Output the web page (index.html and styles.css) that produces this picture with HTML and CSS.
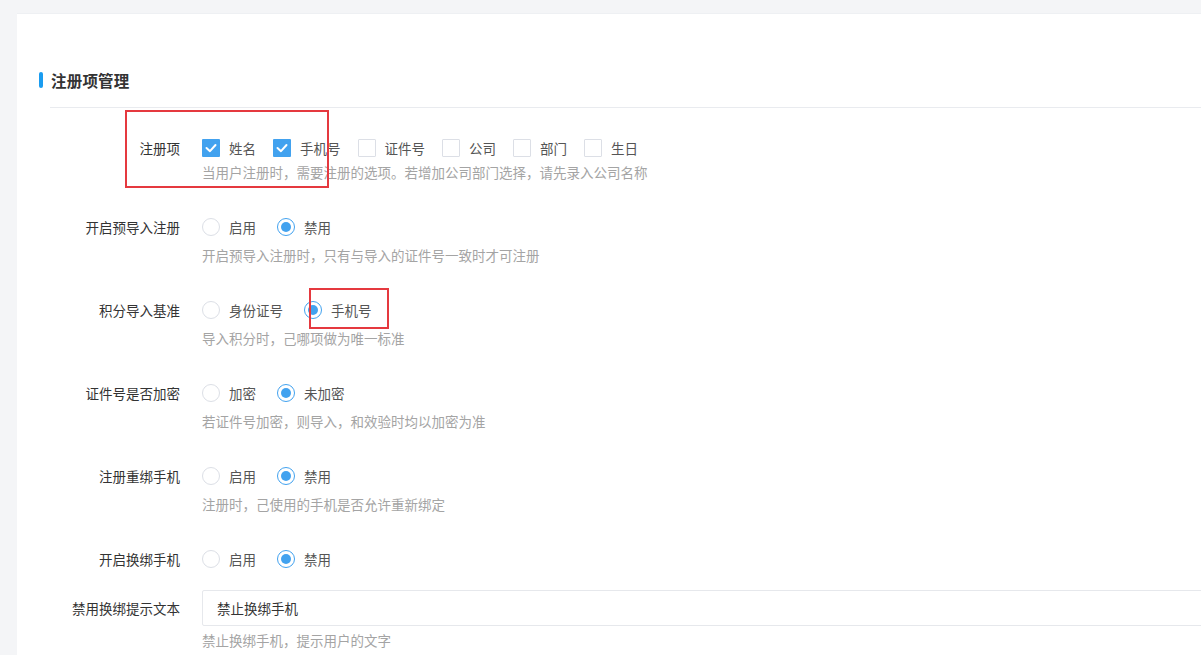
FILE: index.html
```html
<!DOCTYPE html>
<html lang="zh-CN">
<head>
<meta charset="utf-8">
<title>注册项管理</title>
<link rel="stylesheet" href="styles.css">
</head>
<body>
<div class="page">
  <div class="card">
    <div class="section-title"><span class="bar"></span><span class="title-text">注册项管理</span></div>
    <div class="divider"></div>

    <div class="form">
      <div class="form-item item-first">
        <div class="label row-short">注册项</div>
        <div class="field">
          <div class="controls row-short">
            <span class="opt"><span class="checkbox checked"><svg viewBox="0 0 18 18"><polyline points="4.5,9 8,12.2 13.5,6" fill="none" stroke="#fff" stroke-width="2" stroke-linecap="round" stroke-linejoin="round"/></svg></span><span class="opt-text">姓名</span></span>
            <span class="opt"><span class="checkbox checked"><svg viewBox="0 0 18 18"><polyline points="4.5,9 8,12.2 13.5,6" fill="none" stroke="#fff" stroke-width="2" stroke-linecap="round" stroke-linejoin="round"/></svg></span><span class="opt-text">手机号</span></span>
            <span class="opt"><span class="checkbox"></span><span class="opt-text">证件号</span></span>
            <span class="opt"><span class="checkbox"></span><span class="opt-text">公司</span></span>
            <span class="opt"><span class="checkbox"></span><span class="opt-text">部门</span></span>
            <span class="opt"><span class="checkbox"></span><span class="opt-text">生日</span></span>
          </div>
          <div class="hint">当用户注册时，需要注册的选项。若增加公司部门选择，请先录入公司名称</div>
        </div>
      </div>

      <div class="form-item">
        <div class="label">开启预导入注册</div>
        <div class="field">
          <div class="controls">
            <span class="opt radio-opt"><span class="radio"></span><span class="opt-text">启用</span></span>
            <span class="opt radio-opt"><span class="radio checked"></span><span class="opt-text">禁用</span></span>
          </div>
          <div class="hint">开启预导入注册时，只有与导入的证件号一致时才可注册</div>
        </div>
      </div>

      <div class="form-item">
        <div class="label">积分导入基准</div>
        <div class="field">
          <div class="controls">
            <span class="opt radio-opt"><span class="radio"></span><span class="opt-text">身份证号</span></span>
            <span class="opt radio-opt"><span class="radio checked"></span><span class="opt-text">手机号</span></span>
          </div>
          <div class="hint">导入积分时，己哪项做为唯一标准</div>
        </div>
      </div>

      <div class="form-item">
        <div class="label">证件号是否加密</div>
        <div class="field">
          <div class="controls">
            <span class="opt radio-opt"><span class="radio"></span><span class="opt-text">加密</span></span>
            <span class="opt radio-opt"><span class="radio checked"></span><span class="opt-text">未加密</span></span>
          </div>
          <div class="hint">若证件号加密，则导入，和效验时均以加密为准</div>
        </div>
      </div>

      <div class="form-item">
        <div class="label">注册重绑手机</div>
        <div class="field">
          <div class="controls">
            <span class="opt radio-opt"><span class="radio"></span><span class="opt-text">启用</span></span>
            <span class="opt radio-opt"><span class="radio checked"></span><span class="opt-text">禁用</span></span>
          </div>
          <div class="hint">注册时，己使用的手机是否允许重新绑定</div>
        </div>
      </div>

      <div class="form-item item-nohint">
        <div class="label">开启换绑手机</div>
        <div class="field">
          <div class="controls">
            <span class="opt radio-opt"><span class="radio"></span><span class="opt-text">启用</span></span>
            <span class="opt radio-opt"><span class="radio checked"></span><span class="opt-text">禁用</span></span>
          </div>
        </div>
      </div>

      <div class="form-item">
        <div class="label">禁用换绑提示文本</div>
        <div class="field">
          <div class="controls">
            <input class="text-input" type="text" value="禁止换绑手机">
          </div>
          <div class="hint hint-input">禁止换绑手机，提示用户的文字</div>
        </div>
      </div>
    </div>

    <div class="mark mark-one"></div>
    <div class="mark mark-two"></div>
  </div>
</div>
</body>
</html>
```

FILE: styles.css
```css
html, body {
  margin: 0;
  padding: 0;
  overflow: hidden;
  height: 100%;
}

body {
  background: #f4f5f7;
  font-family: "Noto Sans CJK SC", "Noto Sans", sans-serif;
  color: #333;
}

.page {
  padding: 13px 0 0 17px;
  height: 100%;
  box-sizing: border-box;
  overflow: hidden;
}

.card {
  position: relative;
  background: #fff;
  border-top: 1px solid #eef0f3;
  height: 100%;
  box-sizing: border-box;
  padding-top: 54px;
  overflow: hidden;
}

.section-title {
  display: flex;
  align-items: center;
  height: 24px;
  padding-left: 22px;
}

.bar {
  width: 4px;
  height: 16px;
  border-radius: 2px;
  background: #1a9cf0;
  margin-right: 8px;
}

.title-text {
  font-size: 15.5px;
  font-weight: 700;
  color: #333;
  letter-spacing: 0.2px;
}

.divider {
  margin: 15px 0 0 33px;
  border-top: 1px solid #e9ebef;
}

.form {
  padding-top: 26px;
}

.form-item {
  display: grid;
  grid-template-columns: 163px 1fr;
  column-gap: 22px;
  margin-bottom: 27px;
}

.field {
  min-width: 0;
}

.item-nohint {
  margin-bottom: 13px;
}

.label {
  text-align: right;
  font-size: 13.5px;
  line-height: 36px;
  height: 36px;
  color: #333;
  white-space: nowrap;
}

.label.row-short {
  line-height: 28px;
  height: 28px;
}

.controls {
  display: flex;
  align-items: center;
  height: 36px;
}

.controls.row-short {
  height: 28px;
}

.opt {
  display: flex;
  align-items: center;
  margin-right: 17px;
}

.radio-opt {
  margin-right: 21px;
}

.opt-text {
  font-size: 13.5px;
  color: #555;
  margin-left: 9px;
  white-space: nowrap;
}

.checkbox {
  width: 18px;
  height: 18px;
  box-sizing: border-box;
  border: 1px solid #dcdfe6;
  border-radius: 1px;
  background: #fff;
  display: flex;
}

.checkbox svg {
  width: 18px;
  height: 18px;
}

.checkbox.checked {
  background: #42a2ef;
  border: none;
}

.radio {
  width: 18px;
  height: 18px;
  box-sizing: border-box;
  border: 1px solid #dcdfe6;
  border-radius: 50%;
  background: #fff;
  display: flex;
  align-items: center;
  justify-content: center;
}

.radio.checked {
  border: 1.5px solid #42a2ef;
}

.radio.checked::after {
  content: "";
  width: 10px;
  height: 10px;
  border-radius: 50%;
  background: #42a2ef;
}

.hint {
  font-size: 13.5px;
  line-height: 20px;
  color: #a4a4a4;
  white-space: nowrap;
}

.hint-input {
  margin-top: 4px;
}

.text-input {
  flex: none;
  width: 1100px;
  height: 36px;
  box-sizing: border-box;
  border: 1px solid #e6e8ec;
  border-radius: 2px;
  padding: 0 14px;
  font-family: "Noto Sans CJK SC", "Noto Sans", sans-serif;
  font-size: 13.5px;
  color: #333;
  outline: none;
  background: #fff;
}

.mark {
  position: absolute;
  border: 2px solid #e5393f;
  box-sizing: border-box;
  pointer-events: none;
}

.mark-one {
  left: 108px;
  top: 96px;
  width: 204px;
  height: 78px;
}

.mark-two {
  left: 292px;
  top: 274px;
  width: 80px;
  height: 41px;
}
```
